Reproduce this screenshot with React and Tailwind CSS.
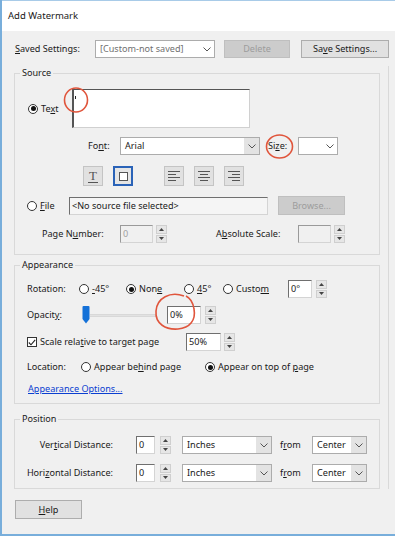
import React from 'react';

function Chevron() {
  return (
    <svg width="8" height="5" viewBox="0 0 8 5">
      <polyline points="0.5,0.5 4,4 7.5,0.5" fill="none" stroke="#555" strokeWidth="1" />
    </svg>
  );
}

function Radio({ checked }) {
  return (
    <span className="w-[10px] h-[10px] rounded-full border border-[#333] bg-white flex items-center justify-center shrink-0">
      {checked && <span className="w-[5px] h-[5px] rounded-full bg-[#111]" />}
    </span>
  );
}

function Spinner() {
  return (
    <div className="w-[11px] h-[18px] flex flex-col gap-[1px] shrink-0">
      <div className="flex-1 bg-[#e6e6e6] border border-[#cfcfcf] flex items-center justify-center">
        <svg width="5" height="3" viewBox="0 0 5 3"><polygon points="2.5,0 5,3 0,3" fill="#444" /></svg>
      </div>
      <div className="flex-1 bg-[#e6e6e6] border border-[#cfcfcf] flex items-center justify-center">
        <svg width="5" height="3" viewBox="0 0 5 3"><polygon points="0,0 5,0 2.5,3" fill="#444" /></svg>
      </div>
    </div>
  );
}

function Field({ className = '', children }) {
  return (
    <div className={`h-[18px] border border-t-[#6f6f6f] border-l-[#6f6f6f] border-r-[#d4d4d4] border-b-[#d4d4d4] flex items-center pl-[2px] shrink-0 ${className}`}>
      {children}
    </div>
  );
}

function Select({ className = '', value, muted, plain }) {
  return (
    <div className={`h-[18px] border border-[#acacac] bg-white flex items-stretch shrink-0 ${className}`}>
      <span className={`flex-1 pl-[4px] flex items-center ${muted ? 'text-[#707070]' : ''}`}>{value}</span>
      <span className={`w-[15px] flex items-center justify-center ${plain ? '' : 'bg-[#e3e3e3]'}`}>
        <Chevron />
      </span>
    </div>
  );
}

function AlignIcon({ kind }) {
  const rows = [[12, 1.5], [8, 4.5], [12, 7.5], [8, 10.5]];
  return (
    <svg width="12" height="12" viewBox="0 0 12 12">
      {rows.map(([len, y], i) => {
        const x = kind === 'left' ? 0 : kind === 'right' ? 12 - len : (12 - len) / 2;
        return <line key={i} x1={x} y1={y} x2={x + len} y2={y} stroke="#555" strokeWidth="1" />;
      })}
    </svg>
  );
}

function ToolBtn({ children, active }) {
  return (
    <div className={`w-[20px] h-[20px] flex items-center justify-center shrink-0 ${active ? 'border-2 border-[#2a63b8] bg-[#e5e5e5]' : 'border border-[#c4c4c4] bg-[#e1e1e1]'}`}>
      {children}
    </div>
  );
}

function Group({ title, children, className = '' }) {
  return (
    <fieldset className={`border border-[#d9d9d9] ${className}`}>
      <legend className="ml-[5px] px-[2px] leading-[14px]">{title}</legend>
      {children}
    </fieldset>
  );
}

export default function App() {
  return (
    <div className="relative w-[395px] h-[536px] bg-[#f0f0f0] border-l-2 border-b-2 border-[#78aedb] font-['Noto_Sans',sans-serif] text-[9.1px] leading-[14px] text-[#1a1a1a] flex flex-col overflow-hidden">
      {/* title bar */}
      <div className="h-[31px] bg-white border-t border-[#a8cbe8] flex items-center pl-[6px] text-[9.5px] shrink-0">
        Add Watermark
      </div>

      {/* saved settings */}
      <div className="mt-[9px] h-[18px] flex items-center pl-[13px] shrink-0">
        <span className="w-[80px]"><u>S</u>aved Settings:</span>
        <Select className="w-[120px]" value="[Custom-not saved]" muted plain />
        <div className="ml-[9px] w-[66px] h-[18px] bg-[#cccccc] border border-[#bfbfbf] text-[#9c9c9c] flex items-center justify-center">Delete</div>
        <div className="ml-[11px] w-[88px] h-[18px] bg-[#e1e1e1] border border-[#adadad] flex items-center justify-center">Sa<u>v</u>e Settings...</div>
      </div>

      <div className="mt-[8px] flex shrink-0">
        <div className="ml-[12px] w-[366px] flex flex-col">
          {/* Source */}
          <Group title="Source">
            <div className="pl-[12px] pt-[9px] pb-[11px] flex flex-col">
              <div className="flex items-center">
                <span className="ml-[1px]"><Radio checked /></span>
                <span className="ml-[3px] w-[31px]">Te<u>x</u>t</span>
                <div className="w-[178px] h-[39px] bg-white border border-[#d0d0d0] border-t-[#555] border-l-2 border-l-[#555]">
                  <div className="ml-[1px] mt-[6px] w-[1px] h-[3px] bg-[#222]" />
                </div>
              </div>
              <div className="mt-[9px] flex items-center h-[18px]">
                <span className="ml-[61px] w-[32px]">Fo<u>n</u>t:</span>
                <Select className="w-[140px]" value="Arial" />
                <span className="ml-[8px] w-[30px]">Si<u>z</u>e:</span>
                <Select className="w-[40px]" value="" plain />
              </div>
              <div className="mt-[11px] flex items-center h-[20px]">
                <div className="ml-[56px]">
                  <ToolBtn>
                    <span className="font-['Liberation_Serif',serif] text-[13px] leading-[12px] text-[#555] border-b border-[#555] px-[1px]">T</span>
                  </ToolBtn>
                </div>
                <div className="ml-[10px]">
                  <ToolBtn active>
                    <span className="w-[9px] h-[9px] bg-white border border-[#555]" />
                  </ToolBtn>
                </div>
                <div className="ml-[31px]"><ToolBtn><AlignIcon kind="left" /></ToolBtn></div>
                <div className="ml-[10px]"><ToolBtn><AlignIcon kind="center" /></ToolBtn></div>
                <div className="ml-[10px]"><ToolBtn><AlignIcon kind="right" /></ToolBtn></div>
              </div>
              <div className="mt-[10px] flex items-center h-[19px]">
                <Radio />
                <span className="ml-[3px] w-[29px]"><u>F</u>ile</span>
                <Field className="w-[199px] bg-[#f5f5f5]">&lt;No source file selected&gt;</Field>
                <div className="ml-[10px] w-[67px] h-[19px] bg-[#cccccc] border border-[#bfbfbf] text-[#9c9c9c] flex items-center justify-center">Browse...</div>
              </div>
              <div className="mt-[10px] flex items-center h-[18px]">
                <span className="ml-[15px] w-[78px]">Page N<u>u</u>mber:</span>
                <Field className="w-[33px] bg-[#f0f0f0] text-[#a0a0a0] border-t-[#9a9a9a] border-l-[#9a9a9a]">0</Field>
                <span className="ml-[3px]"><Spinner /></span>
                <span className="ml-[49px] w-[82px]">A<u>b</u>solute Scale:</span>
                <Field className="w-[33px] bg-[#f0f0f0] border-t-[#9a9a9a] border-l-[#9a9a9a]" />
                <span className="ml-[3px]"><Spinner /></span>
              </div>
            </div>
          </Group>

          {/* Appearance */}
          <Group title="Appearance" className="mt-[3px]">
            <div className="pl-[12px] pt-[8px] pb-[7px] flex flex-col">
              <div className="flex items-center h-[18px]">
                <span className="w-[52px]">Rotation:</span>
                <Radio />
                <span className="ml-[3px] w-[34px]"><u>-</u>45°</span>
                <Radio checked />
                <span className="ml-[3px] w-[45px]">Non<u>e</u></span>
                <Radio />
                <span className="ml-[3px] w-[26px]"><u>4</u>5°</span>
                <Radio />
                <span className="ml-[3px] w-[52px]">Custo<u>m</u></span>
                <Field className="w-[24px] bg-white">0°</Field>
                <span className="ml-[4px]"><Spinner /></span>
              </div>
              <div className="mt-[7px] flex items-center h-[20px]">
                <span className="w-[55px]">Opacit<u>y</u>:</span>
                <div className="w-[74px] flex items-center">
                  <svg width="8" height="18" viewBox="0 0 8 18" className="shrink-0">
                    <path d="M0.5 1 Q0.5 0 1.5 0 H6.5 Q7.5 0 7.5 1 V13 L4 17.5 L0.5 13 Z" fill="#1471d8" />
                  </svg>
                  <div className="flex-1 h-[3px] bg-[#e2e2e2] border-y border-[#d8d8d8]" />
                </div>
                <span className="ml-[11px]"><Field className="w-[34px] bg-white">0%</Field></span>
                <span className="ml-[4px]"><Spinner /></span>
              </div>
              <div className="mt-[8px] flex items-center h-[18px]">
                <span className="w-[10px] h-[10px] border border-[#333] bg-white flex items-center justify-center shrink-0">
                  <svg width="8" height="7" viewBox="0 0 8 7"><polyline points="0.8,3.5 3,5.8 7.2,0.8" fill="none" stroke="#222" strokeWidth="1.1" /></svg>
                </span>
                <span className="ml-[3px] w-[146px]">Scale rela<u>t</u>ive to target page</span>
                <Field className="w-[35px] bg-white">50%</Field>
                <span className="ml-[3px]"><Spinner /></span>
              </div>
              <div className="mt-[8px] flex items-center h-[16px]">
                <span className="w-[54px]">Location:</span>
                <Radio />
                <span className="ml-[3px] w-[111px]">Appear be<u>h</u>ind page</span>
                <Radio checked />
                <span className="ml-[3px]">Appear on top of <u>p</u>age</span>
              </div>
              <div className="mt-[7px] h-[14px] flex items-center">
                <span className="ml-[1px] text-[#0b3fd1] underline">Appearance Options...</span>
              </div>
            </div>
          </Group>

          {/* Position */}
          <Group title="Position" className="mt-[8px]">
            <div className="pl-[12px] pt-[10px] pb-[6px] flex flex-col">
              {[['Ver', 't', 'ical Distance:'], ['Hori', 'z', 'ontal Distance:']].map(([a, b, c], i) => (
                <div key={i} className={`flex items-center h-[18px] ${i ? 'mt-[10px]' : ''}`}>
                  <span className="w-[86px] flex justify-end whitespace-nowrap">
                    <span>{a}<u>{b}</u>{c}</span>
                  </span>
                  <span className="ml-[23px]"><Field className="w-[19px] bg-white">0</Field></span>
                  <span className="ml-[5px]"><Spinner /></span>
                  <span className="ml-[11px]"><Select className="w-[90px]" value="Inches" /></span>
                  <span className="ml-[8px] w-[32px]">f<u>r</u>om</span>
                  <Select className="w-[55px]" value="Center" />
                </div>
              ))}
            </div>
          </Group>
        </div>
        <div className="ml-[8px] w-[1px] bg-[#d9d9d9]" />
      </div>

      <div className="mt-[11px] pl-[13px] shrink-0">
        <div className="w-[67px] h-[19px] bg-[#e1e1e1] border border-[#adadad] flex items-center justify-center"><u>H</u>elp</div>
      </div>

      {/* red annotation marks */}
      <svg className="absolute left-[-2px] top-0 pointer-events-none" width="395" height="536">
        <ellipse cx="76" cy="100" rx="11.5" ry="12" fill="none" stroke="#e0553c" strokeWidth="1.6" />
        <ellipse cx="279.5" cy="146.5" rx="13" ry="11.5" fill="none" stroke="#e0553c" strokeWidth="1.6" />
        <path d="M184 296 C170 291 157 298 156 311 C155 324 166 330 178 329 C190 328 196 320 194 309 C193 302 190 298 186 296" fill="none" stroke="#e0553c" strokeWidth="1.6" />
      </svg>
    </div>
  );
}
